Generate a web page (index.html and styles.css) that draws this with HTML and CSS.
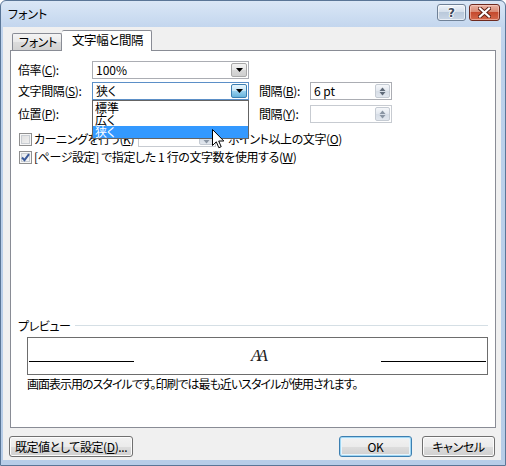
FILE: index.html
```html
<!DOCTYPE html>
<html lang="ja">
<head>
<meta charset="utf-8">
<title>フォント</title>
<link rel="stylesheet" href="styles.css">
</head>
<body>
<div class="window">
  <div class="titlebar">
    <span class="title">フォント</span>
    <div class="capbtns">
      <div class="cap help"><span class="qmark">?</span></div>
      <div class="cap close">
        <svg width="13" height="11" viewBox="0 0 13 11">
          <path d="M2 1.5 L11 9.5 M11 1.5 L2 9.5" stroke="#5a1d12" stroke-width="4" stroke-linecap="square"/>
          <path d="M2 1.5 L11 9.5 M11 1.5 L2 9.5" stroke="#fff" stroke-width="2.2" stroke-linecap="square"/>
        </svg>
      </div>
    </div>
  </div>
  <div class="client">
    <div class="tabs">
      <div class="tab">フォント</div>
      <div class="tab active">文字幅と間隔</div>
    </div>
    <div class="panel">
      <div class="row r1">
        <span class="lbl">倍率(<u>C</u>):</span>
        <div class="combo"><span class="val">100%</span><span class="drop"><svg width="7" height="4" viewBox="0 0 7 4"><path d="M0 0 H7 L3.5 4 Z" fill="#000"/></svg></span></div>
      </div>
      <div class="row r2">
        <span class="lbl">文字間隔(<u>S</u>):</span>
        <div class="combo focus"><span class="val">狭く</span><span class="drop hot"><svg width="7" height="4" viewBox="0 0 7 4"><path d="M0 0 H7 L3.5 4 Z" fill="#000"/></svg></span></div>
        <span class="lbl2">間隔(<u>B</u>):</span>
        <div class="spin"><span class="val">6 pt</span><span class="spinbtn"><svg width="7" height="4" viewBox="0 0 7 4"><path d="M0.5 4 H6.5 L3.5 0.5 Z" fill="#5f6a78"/></svg><svg width="7" height="4" viewBox="0 0 7 4"><path d="M0.5 0 H6.5 L3.5 3.5 Z" fill="#5f6a78"/></svg></span></div>
      </div>
      <div class="row r3">
        <span class="lbl">位置(<u>P</u>):</span>
        <div class="combo"></div>
        <span class="lbl2">間隔(<u>Y</u>):</span>
        <div class="spin dis"><span class="val"></span><span class="spinbtn"><svg width="7" height="4" viewBox="0 0 7 4"><path d="M0.5 4 H6.5 L3.5 0.5 Z" fill="#8a95a3"/></svg><svg width="7" height="4" viewBox="0 0 7 4"><path d="M0.5 0 H6.5 L3.5 3.5 Z" fill="#8a95a3"/></svg></span></div>
      </div>
      <div class="row r4">
        <span class="chk"></span>
        <span class="chklbl">カーニングを行う(<u>K</u>)</span>
        <div class="spin small"><span class="val"></span><span class="spinbtn"><svg width="7" height="4" viewBox="0 0 7 4"><path d="M0.5 4 H6.5 L3.5 0.5 Z" fill="#8a95a3"/></svg><svg width="7" height="4" viewBox="0 0 7 4"><path d="M0.5 0 H6.5 L3.5 3.5 Z" fill="#8a95a3"/></svg></span></div>
        <span class="pt">ポイント以上の文字(<u>O</u>)</span>
      </div>
      <div class="row r5">
        <span class="chk on"><svg width="9" height="9" viewBox="0 0 9 9"><path d="M1 4.5 L3.5 7.2 L8 1.2" fill="none" stroke="#3b5a9a" stroke-width="2"/></svg></span>
        <span class="chklbl">[ページ設定] で指定した 1 行の文字数を使用する(<u>W</u>)</span>
      </div>

      <div class="legend"><span>プレビュー</span><span class="rule"></span></div>
      <div class="preview">
        <span class="pline"></span>
        <span class="aa">AA</span>
        <span class="pline"></span>
      </div>
      <div class="caption">画面表示用のスタイルです。印刷では最も近いスタイルが使用されます。</div>

      <div class="droplist">
        <div class="item">標準</div>
        <div class="item">広く</div>
        <div class="item sel">狭く</div>
      </div>
      <svg class="cursor" width="13" height="20" viewBox="0 0 13 20">
        <path d="M0.5 0.5 L0.5 16.5 L4.3 12.8 L6.8 18.7 L9.2 17.7 L6.7 12 L11.8 12 Z" fill="#fff" stroke="#000" stroke-width="1" stroke-linejoin="miter"/>
      </svg>
    </div>
    <div class="buttons">
      <div class="btn wide">既定値として設定(<u>D</u>)...</div>
      <div class="spacer"></div>
      <div class="btn def">OK</div>
      <div class="btn cancel">キャンセル</div>
    </div>
  </div>
</div>
</body>
</html>
```
FILE: styles.css
```css
* { box-sizing: border-box; }
html, body { margin: 0; padding: 0; }
body {
  width: 506px; height: 466px; overflow: hidden;
  font-family: "Noto Sans CJK JP", "Noto Sans", sans-serif;
  font-size: 12px; line-height: 14px;
  font-feature-settings: "palt";
  color: #000; background: #fff;
}
u { text-decoration: underline; text-underline-offset: 1px; }

.window {
  width: 506px; height: 466px;
  display: flex; flex-direction: column;
  background: linear-gradient(#dae7f6, #c3d6ee 26px, #bcd1eb 60px, #b7cde8);
  border: 1px solid #5a7697;
  border-radius: 6px 6px 0 0;
  padding: 0 4px 5px 2px;
  position: relative;
}
.titlebar {
  height: 26px; flex: none;
  display: flex; justify-content: space-between; align-items: flex-start;
  padding-left: 5px;
}
.title { margin-top: 6px; font-size: 12px; color: #000; }
.capbtns { display: flex; gap: 3px; margin-top: 3px; margin-right: 1px; }
.cap {
  height: 17px; border-radius: 3px;
  display: flex; align-items: center; justify-content: center;
}
.help {
  width: 29px;
  border: 1px solid #6f8197;
  background: linear-gradient(#eef3f9, #d5dfeb 45%, #bac9db 50%, #c9d6e6);
  box-shadow: inset 0 0 0 1px rgba(255,255,255,0.6);
}
.qmark {
  font-family: "DejaVu Sans", sans-serif; font-weight: bold; font-size: 12px; line-height: 12px;
  color: #3d4a5c;
  text-shadow: 1px 0 0 #fff, -1px 0 0 #fff, 0 1px 0 #fff, 0 -1px 0 #fff;
}
.close {
  width: 31px;
  border: 1px solid #6e2a1f;
  background: linear-gradient(#eab3a4, #d98a74 45%, #c54a2e 50%, #d4694c);
  box-shadow: inset 0 0 0 1px rgba(255,220,210,0.5);
}

.client {
  flex: 1; background: #f0f0f0;
  display: flex; flex-direction: column;
}
.tabs {
  display: flex; align-items: flex-end;
  height: 21px; margin-top: 3px; margin-left: 9px; margin-bottom: -1px;
  position: relative; z-index: 1;
}
.tab {
  height: 17px; width: 50px; margin-bottom: 1px;
  border: 1px solid #898c95; border-bottom: none;
  border-radius: 2px 2px 0 0;
  background: linear-gradient(#f4f4f4, #e8e8e8 50%, #dcdcdc 51%, #d2d2d2);
  padding-left: 6px; line-height: 15px; letter-spacing: -0.3px;
}
.tab.active {
  height: 21px; width: 90px; margin-bottom: 0; margin-left: 0;
  background: #fff; border-left: none;
  padding-left: 10px; line-height: 18px; font-size: 12.5px; letter-spacing: -0.4px;
}

.panel {
  height: 378px; flex: none;
  margin: 0 5px 0 7px;
  border: 1px solid #898c95;
  background: #fff;
  padding: 10px 7px 0 7px;
  position: relative;
  display: flex; flex-direction: column;
}
.row { display: flex; align-items: center; height: 18px; flex: none; }
.r2 { margin-top: 3px; }
.r3 { margin-top: 5px; }
.r4 { margin-top: 8px; height: 16px; }
.r5 { margin-top: 3px; height: 14px; }
.lbl { width: 74px; letter-spacing: -0.4px; }
.lbl2 { width: 51px; margin-left: 10px; letter-spacing: -0.4px; }

.combo {
  width: 157px; height: 18px;
  border: 1px solid #abadb3;
  display: flex; align-items: stretch; justify-content: space-between;
  background: #fff;
}
.combo .val { padding-left: 3px; line-height: 15px; }
.drop {
  width: 16px; margin: 1px;
  border: 1px solid #a9a9a9; border-radius: 2px;
  background: linear-gradient(#f3f3f3, #e6e6e6 50%, #d8d8d8 51%, #cfcfcf);
  display: flex; align-items: center; justify-content: center;
}
.combo.focus { border-color: #5b8fc7; }
.drop.hot {
  border-color: #3c7fb1;
  background: linear-gradient(#e8f5fd, #c4e5f6 50%, #98d1ef 51%, #68b3db);
}

.spin {
  width: 82px; height: 18px;
  border: 1px solid #abadb3; background: #fff;
  display: flex; justify-content: space-between; align-items: stretch;
}
.spin .val { padding-left: 3px; line-height: 15px; }
.spinbtn {
  width: 15px; margin: 1px;
  border: 1px solid #c5cbd3; border-radius: 2px;
  background: linear-gradient(#f5f7fa, #e2e7ee 50%, #d6dde6 51%, #e2e7ee);
  display: flex; flex-direction: column; align-items: center; justify-content: center; gap: 1px;
}
.spin.dis { border-color: #c7cbd1; }
.spin.small { width: 78px; height: 16px; border-color: #c7cbd1; flex: none; }

.chk {
  width: 13px; height: 13px; margin-left: 1px;
  border: 1px solid #8f8f8f;
  background: linear-gradient(135deg, #dcdcdc, #f4f4f4);
  box-shadow: inset 0 0 0 1px #f7f7f7, inset 0 0 0 2px #c9cdd2;
  display: flex; align-items: center; justify-content: center; flex: none;
}
.chk.on { background: linear-gradient(135deg, #e3e6ea, #fafafa); }
.chklbl { padding-left: 2px; white-space: nowrap; letter-spacing: -0.4px; }
.r4 .chklbl { width: 106px; flex: none; }
.pt { margin-left: 12px; white-space: nowrap; letter-spacing: -0.4px; }

.legend {
  margin-top: 155px; height: 13px;
  display: flex; align-items: center; letter-spacing: -0.4px;
}
.legend .rule { flex: 1; height: 1px; background: #d5dfe5; margin-left: 4px; }
.preview {
  margin-top: 5px; margin-left: 9px; height: 38px;
  border: 1px solid #6d6d6d;
  display: grid; grid-template-columns: 105px 1fr 105px;
  padding: 0 1px;
}
.pline { height: 1px; background: #000; margin-top: 23px; }
.aa {
  text-align: center;
  font-family: "Liberation Serif", serif; font-style: italic;
  font-size: 17px; line-height: 17px; padding-top: 9px;
  letter-spacing: -4px; color: #222;
}
.caption { margin-top: 2px; margin-left: 9px; line-height: 14px; letter-spacing: -1px; white-space: nowrap; }

.droplist {
  position: absolute; left: 81px; top: 49px;
  width: 157px; height: 39px;
  border: 1px solid #646464; background: #fff;
  padding-top: 1px;
}
.item { height: 12px; line-height: 12px; padding-left: 2px; }
.item.sel { background: #3399ff; color: #fff; }
.cursor { position: absolute; left: 201px; top: 78px; }

.buttons {
  display: flex; align-items: center;
  margin-top: 8px; height: 21px; padding: 0 6px;
}
.spacer { flex: 1; }
.btn {
  height: 21px; width: 73px;
  border: 1px solid #707070; border-radius: 3px;
  background: linear-gradient(#f2f2f2, #ebebeb 50%, #dddddd 51%, #cfcfcf);
  box-shadow: inset 0 0 0 1px #fcfcfc;
  display: flex; align-items: center; justify-content: center;
  line-height: 14px; letter-spacing: -0.4px;
}
.btn.wide { width: 124px; }
.btn.def {
  border-color: #3c7fb1;
  box-shadow: inset 0 0 0 1px #9fd6f3, inset 0 0 0 2px #e7f4fb;
}
.btn.cancel { margin-left: 10px; }
```
